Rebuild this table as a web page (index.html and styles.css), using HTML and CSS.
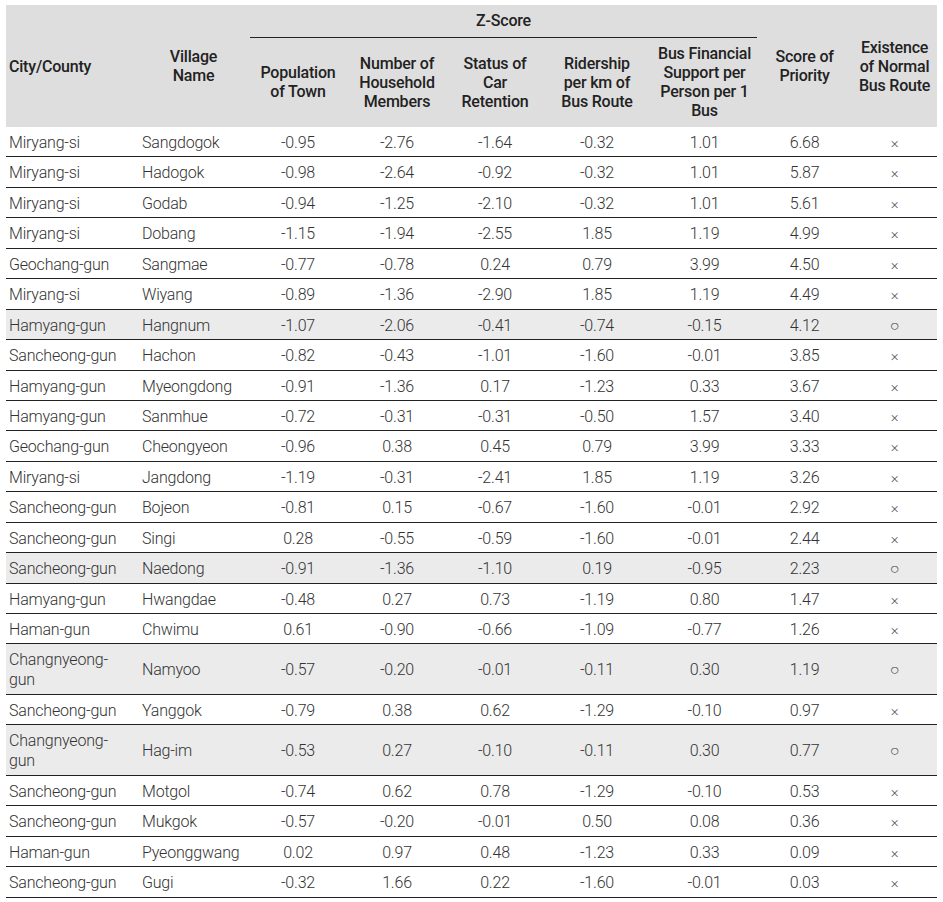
FILE: index.html
```html
<!DOCTYPE html>
<html>
<head>
<meta charset="utf-8">
<link rel="stylesheet" href="styles.css">
</head>
<body>
<table class="zt">
<colgroup>
<col class="c1"><col class="c2"><col class="c3"><col class="c4"><col class="c5"><col class="c6"><col class="c7"><col class="c8"><col class="c9">
</colgroup>
<thead>
<tr class="h1">
<th rowspan="2" class="left">City/County</th>
<th rowspan="2">Village<br>Name</th>
<th colspan="5" class="zs">Z-Score</th>
<th rowspan="2">Score of<br>Priority</th>
<th rowspan="2">Existence<br>of Normal<br>Bus Route</th>
</tr>
<tr class="h2">
<th>Population<br>of Town</th>
<th>Number of<br>Household<br>Members</th>
<th>Status of<br>Car<br>Retention</th>
<th>Ridership<br>per km of<br>Bus Route</th>
<th>Bus Financial<br>Support per<br>Person per 1<br>Bus</th>
</tr>
</thead>
<tbody>
<tr><td>Miryang-si</td><td>Sangdogok</td><td>-0.95</td><td>-2.76</td><td>-1.64</td><td>-0.32</td><td>1.01</td><td>6.68</td><td class="x">×</td></tr>
<tr><td>Miryang-si</td><td>Hadogok</td><td>-0.98</td><td>-2.64</td><td>-0.92</td><td>-0.32</td><td>1.01</td><td>5.87</td><td class="x">×</td></tr>
<tr><td>Miryang-si</td><td>Godab</td><td>-0.94</td><td>-1.25</td><td>-2.10</td><td>-0.32</td><td>1.01</td><td>5.61</td><td class="x">×</td></tr>
<tr><td>Miryang-si</td><td>Dobang</td><td>-1.15</td><td>-1.94</td><td>-2.55</td><td>1.85</td><td>1.19</td><td>4.99</td><td class="x">×</td></tr>
<tr><td>Geochang-gun</td><td>Sangmae</td><td>-0.77</td><td>-0.78</td><td>0.24</td><td>0.79</td><td>3.99</td><td>4.50</td><td class="x">×</td></tr>
<tr><td>Miryang-si</td><td>Wiyang</td><td>-0.89</td><td>-1.36</td><td>-2.90</td><td>1.85</td><td>1.19</td><td>4.49</td><td class="x">×</td></tr>
<tr class="hl"><td>Hamyang-gun</td><td>Hangnum</td><td>-1.07</td><td>-2.06</td><td>-0.41</td><td>-0.74</td><td>-0.15</td><td>4.12</td><td class="o">○</td></tr>
<tr><td>Sancheong-gun</td><td>Hachon</td><td>-0.82</td><td>-0.43</td><td>-1.01</td><td>-1.60</td><td>-0.01</td><td>3.85</td><td class="x">×</td></tr>
<tr><td>Hamyang-gun</td><td>Myeongdong</td><td>-0.91</td><td>-1.36</td><td>0.17</td><td>-1.23</td><td>0.33</td><td>3.67</td><td class="x">×</td></tr>
<tr><td>Hamyang-gun</td><td>Sanmhue</td><td>-0.72</td><td>-0.31</td><td>-0.31</td><td>-0.50</td><td>1.57</td><td>3.40</td><td class="x">×</td></tr>
<tr><td>Geochang-gun</td><td>Cheongyeon</td><td>-0.96</td><td>0.38</td><td>0.45</td><td>0.79</td><td>3.99</td><td>3.33</td><td class="x">×</td></tr>
<tr><td>Miryang-si</td><td>Jangdong</td><td>-1.19</td><td>-0.31</td><td>-2.41</td><td>1.85</td><td>1.19</td><td>3.26</td><td class="x">×</td></tr>
<tr><td>Sancheong-gun</td><td>Bojeon</td><td>-0.81</td><td>0.15</td><td>-0.67</td><td>-1.60</td><td>-0.01</td><td>2.92</td><td class="x">×</td></tr>
<tr><td>Sancheong-gun</td><td>Singi</td><td>0.28</td><td>-0.55</td><td>-0.59</td><td>-1.60</td><td>-0.01</td><td>2.44</td><td class="x">×</td></tr>
<tr class="hl"><td>Sancheong-gun</td><td>Naedong</td><td>-0.91</td><td>-1.36</td><td>-1.10</td><td>0.19</td><td>-0.95</td><td>2.23</td><td class="o">○</td></tr>
<tr><td>Hamyang-gun</td><td>Hwangdae</td><td>-0.48</td><td>0.27</td><td>0.73</td><td>-1.19</td><td>0.80</td><td>1.47</td><td class="x">×</td></tr>
<tr><td>Haman-gun</td><td>Chwimu</td><td>0.61</td><td>-0.90</td><td>-0.66</td><td>-1.09</td><td>-0.77</td><td>1.26</td><td class="x">×</td></tr>
<tr class="hl"><td>Changnyeong-gun</td><td>Namyoo</td><td>-0.57</td><td>-0.20</td><td>-0.01</td><td>-0.11</td><td>0.30</td><td>1.19</td><td class="o">○</td></tr>
<tr><td>Sancheong-gun</td><td>Yanggok</td><td>-0.79</td><td>0.38</td><td>0.62</td><td>-1.29</td><td>-0.10</td><td>0.97</td><td class="x">×</td></tr>
<tr class="hl"><td>Changnyeong-gun</td><td>Hag-im</td><td>-0.53</td><td>0.27</td><td>-0.10</td><td>-0.11</td><td>0.30</td><td>0.77</td><td class="o">○</td></tr>
<tr><td>Sancheong-gun</td><td>Motgol</td><td>-0.74</td><td>0.62</td><td>0.78</td><td>-1.29</td><td>-0.10</td><td>0.53</td><td class="x">×</td></tr>
<tr><td>Sancheong-gun</td><td>Mukgok</td><td>-0.57</td><td>-0.20</td><td>-0.01</td><td>0.50</td><td>0.08</td><td>0.36</td><td class="x">×</td></tr>
<tr><td>Haman-gun</td><td>Pyeonggwang</td><td>0.02</td><td>0.97</td><td>0.48</td><td>-1.23</td><td>0.33</td><td>0.09</td><td class="x">×</td></tr>
<tr><td>Sancheong-gun</td><td>Gugi</td><td>-0.32</td><td>1.66</td><td>0.22</td><td>-1.60</td><td>-0.01</td><td>0.03</td><td class="x">×</td></tr>
</tbody>
</table>
</body>
</html>
```

FILE: styles.css
```css
html, body {
  margin: 0;
  padding: 0;
  background: #ffffff;
}
body {
  padding: 5px 6px;
  font-family: Roboto, "Liberation Sans", sans-serif;
}
.zt {
  border-collapse: collapse;
  table-layout: fixed;
  width: 931px;
}
.c1 { width: 131px; }
.c2 { width: 113px; }
.c3 { width: 96px; }
.c4 { width: 102px; }
.c5 { width: 94px; }
.c6 { width: 110px; }
.c7 { width: 105px; }
.c8 { width: 95px; }
.c9 { width: 85px; }

thead th {
  background: #dedede;
  color: #222;
  font-weight: 500;
  font-size: 16px;
  line-height: 19px;
  text-align: center;
  vertical-align: middle;
  padding: 0 2px;
  letter-spacing: -0.2px;
}
thead th.left {
  text-align: left;
  padding-left: 3px;
}
.h1 { height: 32px; }
.h2 { height: 90px; }
th.zs {
  border-bottom: 1px solid #222;
}
tbody td {
  font-size: 16px;
  font-weight: 300;
  color: #333;
  line-height: 20px;
  padding: 6px 3px 3.45px;
  text-align: center;
  border-bottom: 1px solid #222;
  height: 20px;
  letter-spacing: -0.2px;
}
tbody td:nth-child(1) {
  text-align: left;
  padding-left: 3px;
  padding-right: 6px;
}
tbody td:nth-child(2) {
  text-align: left;
  padding-left: 5px;
}
tbody tr.hl td {
  background: #ebebeb;
}
td.x {
  color: #555;
  font-size: 15px;
}
td.o {
  color: #555;
  font-size: 16px;
}
```
